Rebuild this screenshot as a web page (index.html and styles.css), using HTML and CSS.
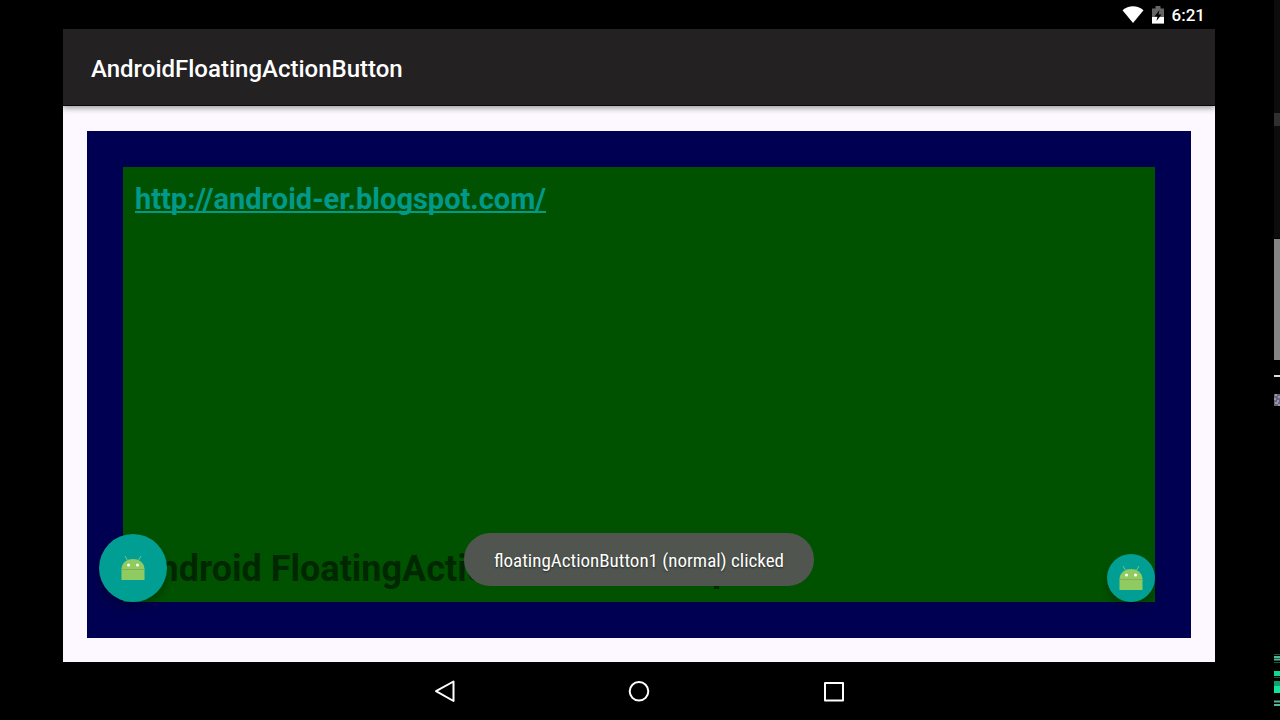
FILE: index.html
```html
<!DOCTYPE html>
<html lang="en">
<head>
  <meta charset="utf-8">
  <title>AndroidFloatingActionButton</title>
  <link rel="stylesheet" href="styles.css">
</head>
<body>
  <div class="device">
    <div class="status-bar">
      <svg class="wifi" width="22" height="18" viewBox="0 0 22 18">
        <path d="M0.5 4.200C6.500 -1.200 15.500 -1.200 21.500 4.200L11 17Z" fill="#fff"/>
      </svg>
      <svg class="battery" width="12" height="18" viewBox="0 0 12 18">
        <path d="M0 2.500H3.500V0H8.500V2.500H12V17.500H0Z" fill="#666"/>
        <path d="M0 11H12V17.500H0Z" fill="#fff"/>
        <path d="M7.500 4L2.500 10.500H5.500L4.500 15L9.500 8.500H6.500Z" fill="#000"/>
      </svg>
      <span class="clock">6:21</span>
    </div>

    <header class="app-bar">
      <h1>AndroidFloatingActionButton</h1>
    </header>

    <main class="content">
      <div class="outer">
        <div class="inner">
          <a class="link" href="http://android-er.blogspot.com/">http://android-er.blogspot.com/</a>
          <p class="caption">Android FloatingActionButton example</p>
        </div>
        <button type="button" class="fab fab-normal" aria-label="Normal action">
          <svg width="24" height="26" viewBox="0 0 24 26">
            <path d="M4 1L7.500 7M20 1L16.500 7" stroke="#6fc491" stroke-width="1"/>
            <path d="M0.500 25V14C1 0.700 23 0.700 23.500 14V25Z" fill="#8fcb60"/>
            <path d="M1 14.500H23" stroke="#84b052" stroke-width="1"/>
            <circle cx="7.500" cy="10" r="1.500" fill="#fff"/>
            <circle cx="16.500" cy="10" r="1.500" fill="#fff"/>
          </svg>
        </button>
        <button type="button" class="fab fab-mini" aria-label="Mini action">
          <svg width="24" height="26" viewBox="0 0 24 26">
            <path d="M4 1L7.500 7M20 1L16.500 7" stroke="#6fc491" stroke-width="1"/>
            <path d="M0.500 25V14C1 0.700 23 0.700 23.500 14V25Z" fill="#8fcb60"/>
            <path d="M1 14.500H23" stroke="#84b052" stroke-width="1"/>
            <circle cx="7.500" cy="10" r="1.500" fill="#fff"/>
            <circle cx="16.500" cy="10" r="1.500" fill="#fff"/>
          </svg>
        </button>
      </div>
      <div class="toast" role="status">floatingActionButton1 (normal) clicked</div>
    </main>

    <nav class="nav-bar">
      <button type="button" aria-label="Back">
        <svg width="24" height="24" viewBox="0 0 24 24"><path d="M21.500 2.500V22L4 12.200Z"/></svg>
      </button>
      <button type="button" aria-label="Home">
        <svg width="24" height="24" viewBox="0 0 24 24"><circle cx="12" cy="12.300" r="9.300"/></svg>
      </button>
      <button type="button" aria-label="Recent apps">
        <svg width="24" height="24" viewBox="0 0 24 24"><rect x="3" y="4" width="18" height="17.500"/></svg>
      </button>
    </nav>
  </div>

  <!-- edge of the neighbouring screen -->
  <svg class="edge" width="6" height="720" viewBox="0 0 6 720" aria-hidden="true">
    <rect y="0" width="6" height="238" fill="#0c0c0c"/>
    <rect y="113" width="6" height="13" fill="#303030"/>
    <rect y="239" width="6" height="121" fill="#858585"/>
    <rect y="375" width="6" height="2" fill="#ddd"/>
    <rect y="394" width="6" height="12" fill="#66667c"/>
    <path d="M1 395h2M4 397h2M0 399h2M3 401h2M1 403h3M4 405h2" stroke="#c8c8d4"/>
    <path d="M0 654.500h6M0 662.500h6M0 677.500h6M0 691.500h6" stroke="#0a5f43"/>
    <path d="M0 657h6M0 659.500h6M0 701.500h6M0 705h6" stroke="#4fb896" stroke-width="2"/>
    <rect y="671" width="6" height="5" fill="#10d696"/>
    <rect y="681" width="6" height="5" fill="#0c9f70"/>
    <rect y="686" width="6" height="7" fill="#10e5a0"/>
  </svg>
</body>
</html>
```
FILE: styles.css
```css
* {
  box-sizing: border-box;
}

body {
  display: flex;
  min-height: 100vh;
  margin: 0;
  background: #000;
  color: #fff;
  font-family: Roboto, "Liberation Sans", sans-serif;
}

button {
  padding: 0;
  border: none;
  background: none;
  cursor: pointer;
}

svg {
  display: block;
}

.device {
  flex: 1;
  display: flex;
  flex-direction: column;
  margin: 0 59px 0 63px;
}

.edge {
  flex: none;
}

/* Status bar */
.status-bar {
  display: flex;
  justify-content: flex-end;
  align-items: center;
  height: 29px;
  padding-right: 10px;
}

.battery {
  margin: 0 8px;
}

.clock {
  font-size: 17px;
  font-weight: 500;
  line-height: 30px;
}

/* App bar */
.app-bar {
  position: relative;
  z-index: 1;
  display: flex;
  align-items: center;
  height: 77px;
  padding: 4px 28px 0;
  background: #232122;
  border-bottom: 1px solid #08080c;
  box-shadow: 0 2px 6px rgba(0, 0, 0, 0.4);
  clip-path: inset(0 0 -12px 0);
}

.app-bar h1 {
  margin: 0;
  font-size: 24px;
  font-weight: 500;
}

/* Content */
.content {
  position: relative;
  flex: 1;
  display: flex;
  padding: 25px 24px 24px 24px;
  background: #fdf8ff;
}

.outer {
  position: relative;
  flex: 1;
  display: flex;
  padding: 36px;
  background: #000052;
}

.inner {
  flex: 1;
  display: flex;
  flex-direction: column;
  justify-content: space-between;
  align-items: flex-start;
  padding: 12px 12px 10px;
  background: #005200;
}

.link {
  color: #00998c;
  font-size: 29px;
  font-weight: 700;
  line-height: 40px;
  text-decoration-thickness: 2px;
  text-underline-offset: 2px;
  text-decoration-skip-ink: none;
}

.caption {
  margin: 0;
  color: #002800;
  font-size: 36px;
  font-weight: 700;
  line-height: 46px;
}

.fab {
  position: absolute;
  bottom: 36px;
  display: flex;
  justify-content: center;
  align-items: center;
  border-radius: 50%;
  background: #009e93;
  box-shadow: 0 6px 10px rgba(0, 0, 0, 0.25);
}

.fab-normal {
  left: 12px;
  width: 68px;
  height: 68px;
}

.fab-mini {
  right: 36px;
  width: 48px;
  height: 48px;
}

.toast {
  position: absolute;
  left: 50%;
  bottom: 76px;
  transform: translateX(-50%);
  padding: 15px 30px 13px;
  border-radius: 27px;
  background: #50564f;
  font-family: "Roboto Condensed", Roboto, sans-serif;
  font-size: 19px;
  line-height: 25px;
  text-shadow: 0 1px 2px rgba(0, 0, 0, 0.6);
  white-space: nowrap;
}

/* Navigation bar */
.nav-bar {
  display: flex;
  justify-content: center;
  align-items: center;
  gap: 171px;
  height: 58px;
}

.nav-bar svg {
  fill: none;
  stroke: #fff;
  stroke-width: 2;
  stroke-linejoin: round;
}
```
